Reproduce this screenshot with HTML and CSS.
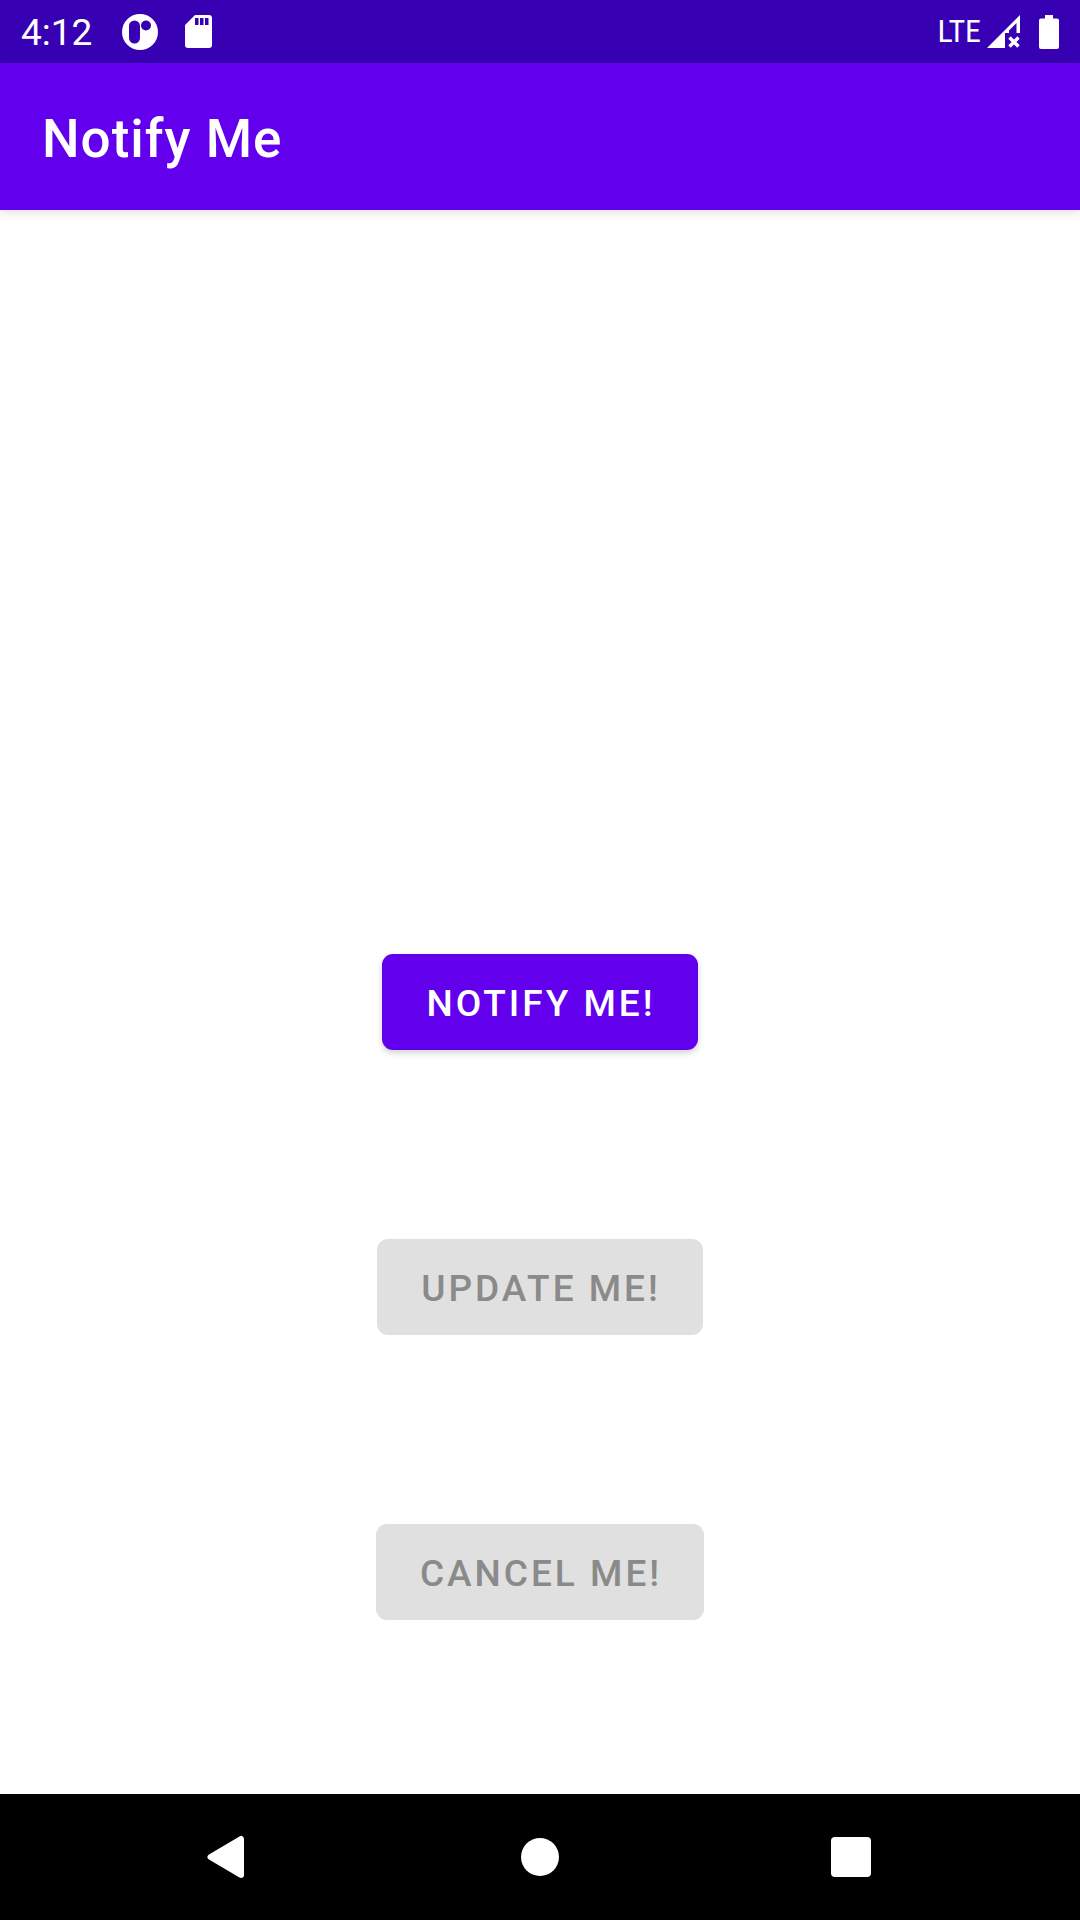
FILE: index.html
```html
<!DOCTYPE html>
<html lang="en">
<head>
  <meta charset="utf-8">
  <meta name="viewport" content="width=device-width, initial-scale=1">
  <title>Notify Me</title>
  <link rel="stylesheet" href="styles.css">
</head>
<body>
  <div class="status-bar">
    <div class="status-left">
      <span class="clock">4:12</span>
      <svg class="notice-icon" viewBox="0 0 36 36" width="36" height="36" aria-hidden="true">
        <path fill="#fff" fill-rule="evenodd" d="M18 0a18 18 0 1 0 0 36a18 18 0 1 0 0-36zM12.500 6.500a5.500 5.500 0 0 1 5.500 5.500v12a5.500 5.500 0 0 1-11 0v-12a5.500 5.500 0 0 1 5.500-5.500zM24 6.500a5 5 0 1 1 0 10a5 5 0 1 1 0-10z"/>
      </svg>
      <svg class="card-icon" viewBox="0 0 27 33" width="27" height="33" aria-hidden="true">
        <path fill="#fff" fill-rule="evenodd" d="M10 0h14a3 3 0 0 1 3 3v27a3 3 0 0 1-3 3H3a3 3 0 0 1-3-3V10zM10 3v7h3.500V3zM15 3v7h3.500V3zM20 3v7h3.500V3z"/>
      </svg>
    </div>
    <div class="status-right">
      <span class="network">LTE</span>
      <svg class="signal-icon" viewBox="0 0 33 33" width="33" height="33" aria-hidden="true">
        <path fill="#fff" d="M33 0v18h-3.500V8L22 15.500V18h-4v15H0z"/>
        <path fill="none" stroke="#fff" stroke-width="3.400" d="M22.500 22.500l9 9M31.500 22.500l-9 9"/>
      </svg>
      <svg class="battery-icon" viewBox="0 0 20 34" width="20" height="34" aria-hidden="true">
        <path fill="#fff" d="M6 0h8v3.500h4a2 2 0 0 1 2 2V32a2 2 0 0 1-2 2H2a2 2 0 0 1-2-2V5.500a2 2 0 0 1 2-2h4z"/>
      </svg>
    </div>
  </div>
  <header class="app-bar">
    <h1 class="app-title">Notify Me</h1>
  </header>
  <main class="content">
    <button class="action" type="button">NOTIFY ME!</button>
    <button class="action" type="button" disabled>UPDATE ME!</button>
    <button class="action" type="button" disabled>CANCEL ME!</button>
  </main>
  <nav class="nav-bar" aria-label="System">
    <button class="nav-key" type="button" aria-label="Back">
      <svg viewBox="0 0 44 44" width="44" height="44" aria-hidden="true">
        <path fill="#fff" stroke="#fff" stroke-width="6" stroke-linejoin="round" d="M34 4v36L3.500 22z"/>
      </svg>
    </button>
    <button class="nav-key" type="button" aria-label="Home">
      <svg viewBox="0 0 44 44" width="44" height="44" aria-hidden="true">
        <circle fill="#fff" cx="22" cy="22" r="19"/>
      </svg>
    </button>
    <button class="nav-key" type="button" aria-label="Recent apps">
      <svg viewBox="0 0 44 44" width="44" height="44" aria-hidden="true">
        <rect fill="#fff" x="2" y="2" width="40" height="40" rx="4"/>
      </svg>
    </button>
  </nav>
</body>
</html>
```
FILE: styles.css
```css
* {
  box-sizing: border-box;
}

body {
  margin: 0;
  min-height: 100vh;
  display: flex;
  flex-direction: column;
  background: #fff;
  font-family: Roboto, "Liberation Sans", sans-serif;
}

svg {
  display: block;
}

.status-bar {
  height: 63px;
  padding: 0 21px;
  display: flex;
  align-items: center;
  justify-content: space-between;
  background: #3700b3;
  color: #fff;
}

.status-left,
.status-right {
  display: flex;
  align-items: center;
}

.clock {
  padding-top: 2px;
  font-size: 37px;
  line-height: 44px;
}

.notice-icon {
  margin-left: 30px;
}

.card-icon {
  margin-left: 27px;
}

.network {
  padding-bottom: 2px;
  font-family: "Roboto Condensed", "Liberation Sans Narrow", Roboto, sans-serif;
  font-size: 32px;
  line-height: 40px;
}

.signal-icon {
  margin-left: 6px;
}

.battery-icon {
  margin-left: 19px;
}

.app-bar {
  height: 147px;
  padding: 4px 42px 0;
  display: flex;
  align-items: center;
  background: #6200ee;
  color: #fff;
  box-shadow: 0 2px 10px rgba(0, 0, 0, 0.14);
}

.app-title {
  margin: 0;
  font-size: 53px;
  font-weight: 500;
  line-height: 64px;
  letter-spacing: 1px;
}

.content {
  flex: 1;
  padding: 48px 42px 174px;
  display: flex;
  flex-direction: column;
  align-items: center;
  justify-content: flex-end;
  gap: 189px;
}

.action {
  height: 96px;
  padding: 3px 42px 0 44px;
  border: 0;
  border-radius: 11px;
  background: #6200ee;
  color: #fff;
  font: 500 37px/44px Roboto, "Liberation Sans", sans-serif;
  letter-spacing: 3px;
  box-shadow: 0 3px 6px rgba(0, 0, 0, 0.18);
}

.action:disabled {
  background: #e0e0e0;
  color: #8a8a8a;
  box-shadow: none;
}

.nav-bar {
  height: 126px;
  padding: 0 73px;
  display: grid;
  grid-template-columns: repeat(3, 1fr);
  background: #000;
}

.nav-key {
  padding: 0;
  border: 0;
  background: none;
  display: flex;
  align-items: center;
  justify-content: center;
}
```
